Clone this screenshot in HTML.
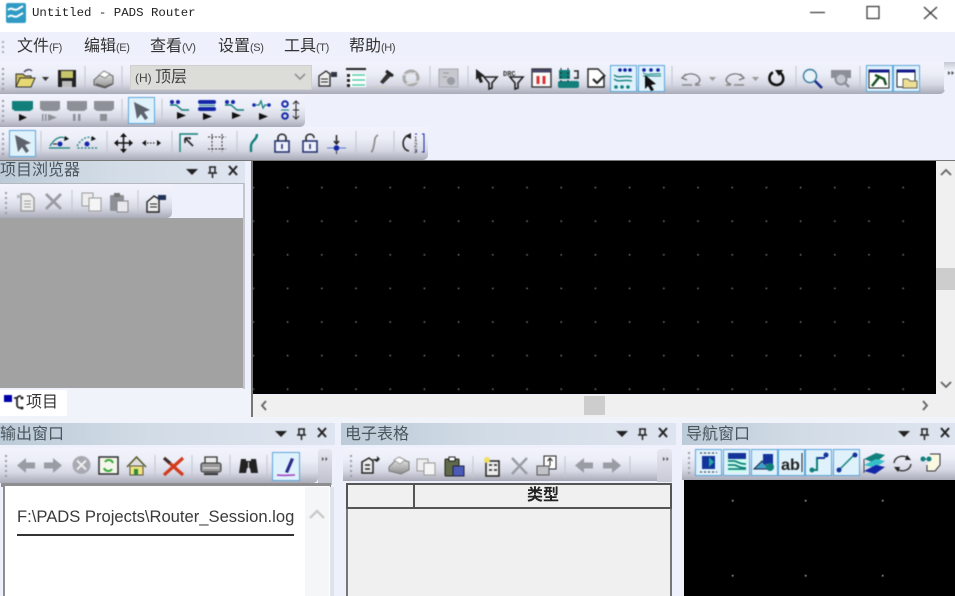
<!DOCTYPE html>
<html lang="zh"><head><meta charset="utf-8"><title>Untitled - PADS Router</title>
<style>
html,body{margin:0;padding:0;width:955px;height:596px;overflow:hidden;background:#eef0fb}
body{position:relative;font-family:"Liberation Sans","Noto Sans CJK SC",sans-serif;color:#333}
.a{position:absolute}
.t{position:absolute;white-space:nowrap}
.tb{position:absolute;background:linear-gradient(180deg,#f2f3fc 0%,#eceef8 35%,#d6d8e4 70%,#a9abb8 100%);border-radius:0 0 5px 0}
.title{position:absolute;height:22px;background:linear-gradient(90deg,#bccbd8 0%,#d2dce6 45%,#dfe5f0 100%)}
.title span{position:absolute;left:0;top:0;font-size:16px;line-height:20px;color:#4a555c}
.m{position:absolute;top:37px;font-size:16px;line-height:20px;color:#333;white-space:nowrap}
.m small{font-size:11px;letter-spacing:-.4px;color:#444}
svg{position:absolute;left:0;top:0;filter:blur(.4px)}
</style></head><body>
<div class="a" style="left:0;top:0;width:955px;height:32px;background:#fff"></div>
<div class="t" style="left:32px;top:5px;font:12.4px/16px 'Liberation Mono',monospace;color:#222">Untitled - PADS Router</div>

<div class="m" style="left:17px">文件<small>(F)</small></div>
<div class="m" style="left:84px">编辑<small>(E)</small></div>
<div class="m" style="left:150px">查看<small>(V)</small></div>
<div class="m" style="left:218px">设置<small>(S)</small></div>
<div class="m" style="left:284px">工具<small>(T)</small></div>
<div class="m" style="left:349px">帮助<small>(H)</small></div>

<div class="tb" style="left:0;top:62px;width:945px;height:32px"></div>
<div class="tb" style="left:0;top:95px;width:305px;height:32px"></div>
<div class="tb" style="left:0;top:127px;width:428px;height:33px"></div>
<div class="a" style="left:130px;top:65px;width:182px;height:25px;background:#dcdcd8;border:1px solid #d0d0d0;box-sizing:border-box"></div>
<div class="t" style="left:135px;top:69px;font-size:12px;line-height:18px;color:#444">(H)</div>
<div class="t" style="left:155px;top:68px;font-size:16px;line-height:20px;color:#444">顶层</div>
<div class="a" style="left:944px;top:62px;width:11px;height:28px;background:linear-gradient(180deg,#c6c8d2,#eef0fb 30%)"></div>

<div class="a" style="left:0;top:160px;width:955px;height:1px;background:#777"></div>
<div class="a" style="left:253px;top:161px;width:683px;height:233px;background:#000"></div>
<div class="a" style="left:936px;top:161px;width:19px;height:234px;background:#f0f0f0"></div>
<div class="a" style="left:936px;top:268px;width:19px;height:22px;background:#cdcdcd"></div>
<div class="a" style="left:253px;top:395px;width:702px;height:22px;background:#f0f0f0"></div>
<div class="a" style="left:584px;top:396px;width:21px;height:19px;background:#cdcdcd"></div>
<div class="a" style="left:251px;top:161px;width:2px;height:256px;background:#777"></div>

<!-- left panel -->
<div class="title" style="left:0;top:161px;width:245px"><span>项目浏览器</span></div>
<div class="a" style="left:0;top:183px;width:245px;height:206px;background:#eef0fb;border-right:2px solid #c4c6ce;border-top:1px solid #b6b8c0;box-sizing:border-box"></div>
<div class="tb" style="left:0;top:184px;width:172px;height:34px"></div>
<div class="a" style="left:0;top:218px;width:243px;height:170px;background:#a2a2a2"></div>
<div class="a" style="left:0;top:389px;width:251px;height:28px;background:#f0f4fa"></div>
<div class="a" style="left:0;top:390px;width:67px;height:26px;background:#fff"></div>
<div class="t" style="left:26px;top:393px;font-size:16px;line-height:20px;color:#333">项目</div>

<!-- output panel -->
<div class="a" style="left:0;top:417px;width:955px;height:6px;background:#f0f4fa"></div>
<div class="title" style="left:0;top:423px;width:335px"><span style="top:2px">输出窗口</span></div>
<div class="tb" style="left:0;top:448px;width:318px;height:35px"></div>
<div class="a" style="left:318px;top:449px;width:14px;height:36px;background:linear-gradient(180deg,#e6e7f0,#bdbfcc);border-radius:3px 3px 0 0"></div>
<div class="a" style="left:1px;top:483px;width:330px;height:4px;background:#8e8e90"></div>
<div class="a" style="left:3px;top:486px;width:327px;height:110px;background:#fff;border-left:2px solid #8e8e90;box-sizing:border-box"></div>
<div class="a" style="left:305px;top:487px;width:24px;height:109px;background:#f5f6f7"></div>
<div class="a" style="left:330px;top:487px;width:4px;height:109px;background:#dfe2e8"></div>
<div class="t" style="left:17px;top:507px;font-size:16.6px;line-height:20px;color:#3a3a3a">F:\PADS Projects\Router_Session.log</div>
<div class="a" style="left:17px;top:534px;width:277px;height:2px;background:#333"></div>

<!-- table panel -->
<div class="title" style="left:341px;top:423px;width:335px"><span style="left:4px;top:2px">电子表格</span></div>
<div class="a" style="left:341px;top:445px;width:336px;height:151px;background:#eef0fb"></div>
<div class="tb" style="left:343px;top:448px;width:319px;height:33px;border-radius:4px 0 4px 0"></div>
<div class="a" style="left:657px;top:449px;width:15px;height:33px;background:linear-gradient(180deg,#e6e7f0,#c8cad6);border-radius:3px 3px 0 0"></div>
<div class="a" style="left:346px;top:484px;width:326px;height:112px;background:#f0f0f0;border-left:2px solid #777;border-right:2px solid #777;box-sizing:border-box"></div>
<div class="a" style="left:346px;top:483px;width:326px;height:26px;background:#f0f0f0;border:2px solid #555;box-sizing:border-box"></div>
<div class="a" style="left:413px;top:484px;width:2px;height:25px;background:#555"></div>
<div class="t" style="left:527px;top:486px;font-size:16px;line-height:20px;font-weight:bold;color:#222">类型</div>

<!-- nav panel -->
<div class="title" style="left:682px;top:423px;width:273px"><span style="left:4px;top:2px">导航窗口</span></div>
<div class="tb" style="left:682px;top:445px;width:273px;height:35px;border-radius:0"></div>
<div class="a" style="left:684px;top:480px;width:271px;height:116px;background:#000"></div>

<svg width="955" height="596" viewBox="0 0 955 596" xmlns="http://www.w3.org/2000/svg">
<defs>
<pattern id="g" x="287" y="187" width="34.2" height="33.6" patternUnits="userSpaceOnUse"><rect width="1.2" height="1.2" fill="#bbb"/></pattern>
<linearGradient id="pr" x1="0" y1="0" x2="0" y2="1"><stop offset="0" stop-color="#eee"/><stop offset="1" stop-color="#8c8c8c"/></linearGradient>
<g id="filterT"><path d="M0 0h13l-5 6v5l-3 1V6z" fill="none" stroke="#222" stroke-width="1.6"/></g>
<g id="hl"><rect x=".5" y=".5" width="26" height="26" fill="#dff1fb" stroke="#5ba6dc"/></g>
<g id="grip"><path d="M0 0h2v2H0zM0 5h2v2H0zM0 10h2v2H0zM0 15h2v2H0zM0 20h2v2H0z" fill="#9a9aa6"/></g>
<g id="arr"><path d="M0 7.500 9 0v4.500h9v6H9V15z" fill="#9a9ca4"/></g>
</defs>
<rect x="253" y="161" width="683" height="233" fill="url(#g)"/>
<g fill="#ddd"><rect x="732" y="500" width="1.4" height="1.4"/><rect x="805" y="500" width="1.4" height="1.4"/><rect x="882" y="500" width="1.4" height="1.4"/><rect x="732" y="575" width="1.4" height="1.4"/><rect x="805" y="575" width="1.4" height="1.4"/><rect x="882" y="575" width="1.4" height="1.4"/></g>

<!-- app icon -->
<rect x="6" y="3" width="20" height="20" rx="2" fill="#2f9bc4"/>
<path d="M8 10c4-4 6 2 10-1l5-3M8 17c4-4 6 2 10-1l5-3" stroke="#fff" stroke-width="2" fill="none"/>
<!-- window controls -->
<path d="M810 12.500h15" stroke="#333" stroke-width="1.2"/>
<rect x="867" y="6.500" width="12" height="12" fill="none" stroke="#333" stroke-width="1.2"/>
<path d="M924 7l13 12M937 7l-13 12" stroke="#333" stroke-width="1.2"/>
<!-- grips -->
<path d="M2 41h2v2H2zM2 46h2v2H2zM2 51h2v2H2z" fill="#a8a8b4"/>
<use href="#grip" x="2" y="68"/><use href="#grip" x="2" y="100"/><use href="#grip" x="2" y="133"/><use href="#grip" x="5" y="192"/><use href="#grip" x="5" y="455"/><use href="#grip" x="350" y="455"/><use href="#grip" x="688" y="452"/>
<!-- separators -->
<path d="M85 66v24M122 66v24M430 66v24M468 66v24M672 66v24M796 66v24M860 66v24M122 99v24M162 99v24M41 131v24M107 131v24M172 131v24M237 131v24M356 131v24M394 131v24M72 190v22M138 190v22M155 455v22M192 455v22M230 455v22M267 455v22M473 456v22M565 456v22M630 456v22" stroke="#c4c6d0"/>
<!-- open -->
<path d="M16 87V74h7l2 2h6v3" fill="#c9b95a" stroke="#333"/><path d="M16 87l4-9h15l-4 9z" fill="#e6d873" stroke="#333"/><path d="M24 72c3-3 6-3 8-1" stroke="#446" fill="none" stroke-width="1.4"/>
<path d="M42 77h7l-3.500 4z" fill="#333"/>
<!-- save -->
<rect x="58" y="70" width="18" height="17" fill="#222"/><rect x="61" y="71" width="12" height="7" fill="#c8c66a"/><rect x="62" y="81" width="10" height="6" fill="#bbb"/>
<!-- printer -->
<path d="M94 80l9-8 10 4v8l-8 4-11-3z" fill="url(#pr)" stroke="#666"/><path d="M99 75l5-4 6 3-5 4z" fill="#fff" stroke="#888"/><path d="M96 84l9 3 7-3" stroke="#555" fill="none" stroke-width="1.4"/>
<path d="M295 74l5 5 5-5" stroke="#888" fill="none" stroke-width="1.5"/>
<!-- properties -->
<path d="M319 76l7-5 4 3v12h-11z" fill="#eee" stroke="#222" stroke-width="1.3"/><path d="M321 79h7M321 82h7" stroke="#222"/><path d="M331 72h6v5h-6z" fill="#334"/>
<!-- list -->
<path d="M346 69h20" stroke="#222" stroke-width="2"/><path d="M347 73h19v14h-19z" fill="#fff"/><path d="M347 74h3v3h-3zM347 79h3v3h-3zM347 84h3v3h-3z" fill="#222"/><path d="M352 75h13M352 80h13M352 85h13" stroke="#5ca" stroke-width="1.5"/>
<!-- flashlight -->
<path d="M380 82l8-10 4 3-9 9z" fill="#333"/><path d="M386 71l7 5" stroke="#222" stroke-width="3"/><path d="M375 87h12" stroke="#ccc" stroke-width="2"/>
<!-- refresh grey -->
<circle cx="411" cy="78" r="7" fill="none" stroke="#aaa" stroke-width="3"/><path d="M402 75l14-2M406 84l14-3" stroke="#ddd" stroke-width="1.5"/>
<!-- grey doc -->
<rect x="439" y="69" width="19" height="18" fill="#c6c8ce" stroke="#a8aab2"/><circle cx="451" cy="81" r="4" fill="#9a9ca6"/><path d="M443 73h6M443 77h4" stroke="#999"/>
<!-- cursor filter -->
<path d="M476 69l9 7-4 1 2 5-3 1-2-5-2 2z" fill="#222"/><use href="#filterT" x="484" y="77"/>
<text x="503" y="76" font-family="Liberation Mono" font-size="7" font-weight="bold" fill="#333">DRC</text><use href="#filterT" x="510" y="77"/>
<!-- calendar -->
<rect x="532" y="69" width="19" height="18" fill="#fbfbfb" stroke="#333" stroke-width="1.4"/><path d="M532 71h19" stroke="#446" stroke-width="3"/><path d="M538 76v8M544 76v8" stroke="#d33" stroke-width="3"/>
<!-- chip -->
<rect x="558" y="81" width="21" height="7" rx="2" fill="#127f7b"/><rect x="559" y="70" width="11" height="9" fill="#127f7b"/><path d="M561 68v14M568 68v14" stroke="#222" stroke-width="1" stroke-dasharray="2 2"/><path d="M574 71h4v7h-4" fill="none" stroke="#222" stroke-width="1.500"/>
<!-- doc check -->
<path d="M588 69h10l6 6v12h-16z" fill="#fff" stroke="#222" stroke-width="1.4"/><path d="M593 79l4 4 8-8" stroke="#222" stroke-width="2.200" fill="none"/>
<!-- highlight pair -->
<use href="#hl" x="610" y="65"/><use href="#hl" x="638" y="65"/>
<g fill="#0a1e9e"><circle cx="620" cy="70" r="1.800"/><circle cx="625" cy="70" r="1.800"/><circle cx="630" cy="70" r="1.800"/><circle cx="644" cy="70" r="1.800"/><circle cx="651" cy="70" r="1.800"/><circle cx="658" cy="70" r="1.800"/></g>
<path d="M614 75c5 4 8 0 18 2M614 79c5 4 8 0 18 2" stroke="#127f7b" stroke-width="1.400" fill="none"/><path d="M643 73c5 3 9 0 18 1M643 76h18" stroke="#127f7b" fill="none"/>
<g fill="#127f7b"><circle cx="616" cy="87" r="1.800"/><circle cx="622" cy="87" r="1.800"/><circle cx="628" cy="87" r="1.800"/></g>
<path d="M645 75l11 9-5 1 3 5-3 1-3-5-3 3z" fill="#111"/>
<!-- undo/redo -->
<path d="M686 74l-4 4 5 2M683 77c5-5 15-4 17 3-1 3-3 4-5 4" stroke="#777" fill="none" stroke-width="1.300"/><path d="M682 85h10M695 85h5" stroke="#888" stroke-width="1.500"/>
<path d="M709 77h7l-3.500 4z" fill="#999"/>
<path d="M740 74l4 4-5 2M743 77c-5-5-15-4-17 3 1 3 3 4 5 4" stroke="#777" fill="none" stroke-width="1.300"/><path d="M726 85h5M734 85h10" stroke="#888" stroke-width="1.500"/>
<path d="M752 77h7l-3.500 4z" fill="#999"/>
<path d="M773 72.500c-5 2-5.500 11 3 12.500 8 0 10-9 3-13" stroke="#111" stroke-width="2.600" fill="none"/><path d="M775 70h8l-4 6z" fill="#111"/>
<!-- magnifier -->
<circle cx="810" cy="76" r="6.500" fill="#e8f2f8" stroke="#3b7da0" stroke-width="1.400"/><path d="M815 81l7 7" stroke="#1a2a8a" stroke-width="2.600"/>
<rect x="831" y="70" width="20" height="8" fill="#8d8f98"/><circle cx="841" cy="79" r="5.500" fill="#c4c6cf" stroke="#8d8f98" stroke-width="2"/><path d="M845 83l4 4" stroke="#8d8f98" stroke-width="2.400"/>
<use href="#hl" x="866" y="65"/><use href="#hl" x="893" y="65"/>
<rect x="869" y="70" width="20" height="18" fill="#fff" stroke="#222"/><path d="M869 71h20" stroke="#13198a" stroke-width="3"/><path d="M872 86l8-10M875 75l9 4 2 6" stroke="#16511f" stroke-width="2.500" fill="none"/>
<rect x="897" y="70" width="18" height="17" fill="#fff" stroke="#222"/><path d="M897 71h18" stroke="#13198a" stroke-width="3"/><path d="M903 79h5l2 2h7v7h-14z" fill="#eedf94" stroke="#665"/>
<path d="M948 71l2.500 2-2.500 2zM951.500 71l2.500 2-2.500 2z" fill="#444"/>

<!-- row 2 -->
<path d="M12 101h21v8l-3 2H15l-3-2z" fill="#127f7b"/><path d="M19 114l8 3.500-8 3.500z" fill="#111"/>
<g fill="#8e9098"><path d="M40 101h20v8l-3 2H43l-3-2z"/><path d="M67 101h20v8l-3 2H70l-3-2z"/><path d="M94 101h20v8l-3 2H97l-3-2z"/><path d="M42 114h1.500v7H42zM45 114h1.500v7H45zM48 114l9 3.500-9 3.500z"/><path d="M73 114h2.500v7H73zM78 114h2.500v7H78z"/><rect x="100" y="114" width="7" height="7"/></g>
<use href="#hl" x="128" y="97"/><path d="M134 102l16 8-6 2 4 6-3 2-4-6-4 5z" fill="#5e626c"/>
<g id="r2a"><circle cx="172" cy="102" r="2" fill="#1326a8"/><circle cx="178" cy="102" r="2" fill="#1326a8"/><path d="M170 105h6l6 5h7" stroke="#127f7b" stroke-width="1.400" fill="none"/><path d="M177 112l9 3.500-9 3.500z" fill="#111"/></g>
<rect x="198" y="100" width="18" height="4" rx="2" fill="#1326a8"/><rect x="198" y="107" width="18" height="4" rx="2" fill="#1326a8"/><path d="M203 113l9 3.500-9 3.500z" fill="#111"/><path d="M199 105.500h16" stroke="#127f7b"/>
<use href="#r2a" x="55"/>
<circle cx="254" cy="105" r="1.800" fill="#1326a8"/><circle cx="269" cy="105" r="1.800" fill="#1326a8"/><path d="M256 105h3l2-4 2 7 2-3h2" stroke="#127f7b" fill="none" stroke-width="1.300"/><path d="M259 113l9 3.500-9 3.500z" fill="#111"/>
<circle cx="285" cy="104" r="2.800" fill="none" stroke="#1326a8" stroke-width="2"/><circle cx="285" cy="116" r="2.800" fill="none" stroke="#1326a8" stroke-width="2"/><path d="M281 110h8" stroke="#127f7b"/><path d="M296 101v18M293 104l3-3 3 3M293 116l3 3 3-3M293 110h6" stroke="#222" fill="none"/>

<!-- row 3 -->
<use href="#hl" x="9" y="130"/><path d="M15 135l16 8-6 2 4 6-3 2-4-6-4 5z" fill="#5e626c"/>
<path d="M50 146c5-8 10-10 15-8M70 148H49" stroke="#127f7b" stroke-width="1.200" fill="none"/><circle cx="60" cy="144" r="2.500" fill="#1326a8"/><path d="M65 136l4 3-5 2z" fill="#111"/><path d="M53 144h4" stroke="#111"/>
<path d="M77 146c5-8 10-10 15-8M97 148H76" stroke="#127f7b" stroke-width="1.200" fill="none" stroke-dasharray="2 1.500"/><circle cx="87" cy="144" r="2.500" fill="#1326a8"/><path d="M92 136l4 3-5 2z" fill="#111"/>
<path d="M123.500 134v18M115 143h17" stroke="#111" stroke-width="1.500"/><path d="M123.500 133l-3.500 4h7zM123.500 153l-3.500-4h7zM114 143l4-3.500v7zM133 143l-4-3.500v7z" fill="#111"/>
<path d="M142 143l4-3v6zM161 143l-4-3v6z" fill="#111"/><path d="M147 143h9" stroke="#111" stroke-dasharray="1.500 1.500"/>
<path d="M180 152v-18h18" stroke="#127f7b" stroke-width="1.400" fill="none"/><path d="M185 138l8 8M185 138h5v1.500M185 138v5" stroke="#222" stroke-width="1.600" fill="none"/>
<path d="M208 137h18M208 149h18M212 134v18M222 134v18" stroke="#333" stroke-dasharray="2 1.500" fill="none"/>
<path d="M257 134c0 6-6 7-6 12v6" stroke="#127f7b" stroke-width="2.400" fill="none"/>
<rect x="275" y="141" width="14" height="11" fill="#eef0fb" stroke="#1a2a6a" stroke-width="1.500"/><path d="M278 141v-3c0-5 8-5 8 0v3" stroke="#222" stroke-width="1.600" fill="none"/><path d="M282 144v5" stroke="#1a2a6a" stroke-width="1.500"/>
<rect x="303" y="141" width="14" height="11" fill="#eef0fb" stroke="#1a2a6a" stroke-width="1.500"/><path d="M306 141v-3c0-5 8-5 8 0" stroke="#222" stroke-width="1.600" fill="none"/><path d="M310 144v5" stroke="#1a2a6a" stroke-width="1.500"/>
<path d="M336.500 135v9M334 141l2.500 3 2.500-3" stroke="#222" stroke-width="1.500" fill="none"/><path d="M327 148h19" stroke="#5a7ad0"/><circle cx="336.500" cy="148" r="2.800" fill="#1326a8"/><path d="M336.500 151v3" stroke="#333"/>
<path d="M378 135c-4 2-3 6-4 10s-1 6-3 7" stroke="#888" stroke-width="1.600" fill="none"/>
<path d="M410 135c-9 1-9 15-1 16" stroke="#222" stroke-width="1.500" fill="none"/><path d="M405 136l6-3v6z" fill="#222"/><path d="M415 134h2M415 151h2M422 134h2v18h-2" stroke="#1326a8" fill="none"/><text x="414" y="141" font-size="6" fill="#222" font-family="Liberation Sans">1</text><text x="414" y="147" font-size="6" fill="#222" font-family="Liberation Sans">2</text><text x="414" y="153" font-size="6" fill="#222" font-family="Liberation Sans">3</text>

<!-- left title controls -->
<g id="ctl"><path d="M186 169h12l-6 6z" fill="#222"/><path d="M209 167h7M210 167h5v6h-5zM208 173h9M212.500 173v5" stroke="#222" stroke-width="1.500" fill="none"/><path d="M229 166l8 9M237 166l-8 9" stroke="#222" stroke-width="2"/></g>
<use href="#ctl" x="89" y="262"/><use href="#ctl" x="430" y="262"/><use href="#ctl" x="712" y="262"/>
<!-- left toolbar -->
<path d="M21 194h9l4 4v13H21z" fill="#eee" stroke="#999" stroke-width="1.400"/><path d="M24 201h7M24 204h7M24 207h7" stroke="#999"/><path d="M17 195l3 3M20 195l-3 3" stroke="#aaa"/>
<path d="M46 194l15 15M61 194l-15 15" stroke="#9a9ca4" stroke-width="2.800"/>
<rect x="82" y="193" width="11" height="13" fill="#eee" stroke="#999"/><rect x="89" y="198" width="12" height="13" fill="#f5f5f5" stroke="#999"/>
<rect x="110" y="195" width="14" height="16" rx="1.500" fill="#8e9098"/><rect x="114" y="193" width="6" height="4" fill="#777"/><rect x="117" y="201" width="11" height="11" fill="#e8e8ee" stroke="#888"/>
<path d="M147 202l7-6 5 3v13h-12z" fill="#eee" stroke="#222" stroke-width="1.400"/><path d="M150 204h7M150 207h7" stroke="#222"/><path d="M158 195h8v5h-8z" fill="#22335a"/>
<!-- tab icon -->
<rect x="4" y="395" width="8" height="7" fill="#0000a8"/><path d="M14 398h4M21 396c-3 0-4 1-4 3v6c0 2 1 3 5 3" stroke="#222" stroke-width="1.800" fill="none"/><circle cx="22" cy="398" r="1.500" fill="#222"/><circle cx="22" cy="408" r="1.500" fill="#222"/>

<!-- scroll arrows -->
<path d="M941 175l5-5 5 5M941 382l5 5 5-5" stroke="#606060" stroke-width="1.800" fill="none"/>
<path d="M266 401l-4 4.500 4 4.500M923 401l4 4.500-4 4.500" stroke="#606060" stroke-width="1.800" fill="none"/>
<path d="M310 518l7-7 7 7" stroke="#c6c6c6" stroke-width="2.200" fill="none"/>

<!-- output toolbar -->
<use href="#arr" x="17" y="458"/><g transform="translate(62,458) scale(-1,1)"><use href="#arr"/></g>
<circle cx="81.500" cy="465" r="9" fill="#a8aab2"/><path d="M77 460.500l9 9M86 460.500l-9 9" stroke="#eee" stroke-width="2"/>
<rect x="99" y="457" width="19" height="17" fill="#f4f6ec" stroke="#222" stroke-width="1.400"/><path d="M105 462a4.500 4.500 0 0 1 8 1M112 469a4.500 4.500 0 0 1-8-1" stroke="#3a3" stroke-width="2" fill="none"/>
<path d="M127 467l9.500-10 9.500 10" stroke="#552" stroke-width="1.500" fill="#ddd"/><rect x="130" y="466" width="13" height="9" fill="#f2e27a" stroke="#554"/><rect x="134" y="469" width="4" height="6" fill="#2a8a3a"/>
<path d="M164 458l19 17M183 458l-19 17" stroke="#d23a1c" stroke-width="3.200"/><path d="M164 458l6 5" stroke="#333" stroke-width="3"/>
<path d="M205 457h12v7h-12z" fill="#eee" stroke="#333" stroke-width="1.300"/><rect x="201" y="463" width="20" height="9" rx="2" fill="#999" stroke="#333"/><path d="M203 468h16" stroke="#eee"/><path d="M204 474h14" stroke="#333" stroke-width="2.200"/>
<path d="M241 459h5v2h5v-2h5l2 14h-7l-1-5h-3l-1 5h-7z" fill="#222"/><path d="M248.500 462v10" stroke="#dcdde6"/>
<rect x="272.500" y="452.500" width="27" height="28" fill="#dff1fb" stroke="#5ba6dc"/><path d="M277 475c6 1 12 0 18 0" stroke="#a040c0" stroke-width="1.500" fill="none"/><path d="M285 472l6-14 3 1-6 14z" fill="#2a2a8a"/>
<path d="M322 457l2 2-2 2zM325.500 457l2 2-2 2z" fill="#444"/>

<!-- table toolbar -->
<path d="M362 462l7-4 4 3v12h-11z" fill="#eee" stroke="#222" stroke-width="1.500"/><path d="M365 465h5M365 469h5" stroke="#222" stroke-width="1.500"/><path d="M372 459h5v-3l3 3-3 3" fill="#222"/>
<path d="M389 467l9-9 11 4v8l-8 4-12-3z" fill="url(#pr)" stroke="#777"/><path d="M394 460l5-3 6 3-5 4z" fill="#fff" stroke="#999"/>
<rect x="417" y="459" width="11" height="12" fill="#eee" stroke="#999"/><rect x="424" y="463" width="11" height="12" fill="#f5f5f5" stroke="#999"/>
<rect x="445" y="459" width="14" height="17" rx="1" fill="#5e6a4a" stroke="#222"/><rect x="449" y="457" width="6" height="4" fill="#fff" stroke="#222"/><rect x="453" y="466" width="11" height="10" fill="#4a5ab8" stroke="#224"/>
<rect x="486" y="461" width="13" height="15" fill="#eee" stroke="#222" stroke-width="1.500"/><path d="M489 465h3M489 470h3M494 465h3M494 470h3" stroke="#222" stroke-width="1.500"/><circle cx="487" cy="460" r="3" fill="#eedf60"/>
<path d="M512 458l15 16M527 458l-15 16" stroke="#9a9ca4" stroke-width="2.400"/>
<rect x="544" y="456" width="12" height="13" fill="#fff" stroke="#222"/><rect x="537" y="466" width="12" height="9" fill="#c0c2c8" stroke="#555"/><path d="M550 459v7M547.500 461l2.500-3 2.500 3" stroke="#222" fill="none"/>
<use href="#arr" x="575" y="458"/><g transform="translate(621,458) scale(-1,1)"><use href="#arr"/></g>
<path d="M663 457l2 2-2 2zM666.500 457l2 2-2 2z" fill="#444"/>

<!-- nav toolbar -->
<use href="#hl" x="695" y="449"/><use href="#hl" x="723" y="449"/><use href="#hl" x="751" y="449"/><use href="#hl" x="778" y="449"/><use href="#hl" x="805" y="449"/><use href="#hl" x="833" y="449"/>
<rect x="702" y="456" width="13" height="13" fill="#12339a"/><path d="M700 453h17M700 472h17" stroke="#222" stroke-dasharray="2 2"/><path d="M709 457l5 5-5 5z" fill="#2aa"/>
<rect x="727" y="453" width="19" height="19" fill="#cfe"/><rect x="728" y="453" width="18" height="6" fill="#13339a"/><path d="M728 461h6c3 0 4 3 12 3M728 465h6c3 0 4 3 12 3M728 469h18" stroke="#127f7b" stroke-width="1.800" fill="none"/>
<path d="M754 469l8-8 8 8z" fill="#3fa0c8" stroke="#224"/><rect x="763" y="454" width="10" height="10" fill="#13339a"/><circle cx="770" cy="467" r="4" fill="#127f7b"/>
<text x="781" y="470" font-family="Liberation Sans" font-size="16" font-weight="bold" fill="#222" textLength="19" lengthAdjust="spacingAndGlyphs">ab</text><path d="M802 453v19" stroke="#222"/>
<path d="M811 470h6v-12h8" stroke="#127f7b" stroke-width="2" fill="none"/><path d="M817 458h8" stroke="#13339a" stroke-width="2"/><circle cx="826" cy="455" r="2.500" fill="#13339a"/><circle cx="812" cy="470" r="2.500" fill="#127f7b"/>
<path d="M840 469l14-14" stroke="#127f7b" stroke-width="1.500"/><circle cx="839" cy="470" r="2.500" fill="#13339a"/><circle cx="855" cy="455" r="2.500" fill="#13339a"/>
<path d="M864 459l12-6 9 2-10 8z" fill="#127f7b"/><path d="M864 465l12-6 9 2-10 7z" fill="#35c0c8"/><path d="M864 471l12-6 9 2-10 7z" fill="#1326a8"/><path d="M864 459v14" stroke="#222" stroke-width=".8"/>
<path d="M894 463c1-7 10-9 15-4M911 464c-1 7-10 9-15 4" stroke="#333" stroke-width="1.400" fill="none"/><path d="M907 455l4 5-6 0zM898 472l-4-5 6 0z" fill="#222"/>
<path d="M930 454h10v11l-5 6h-8v-6" fill="#fbf8e2" stroke="#333"/><circle cx="923" cy="459" r="2.500" fill="#127f7b"/><circle cx="929" cy="459" r="2.500" fill="#127f7b"/><path d="M925 459h3" stroke="#127f7b"/>
</svg>
</body></html>
